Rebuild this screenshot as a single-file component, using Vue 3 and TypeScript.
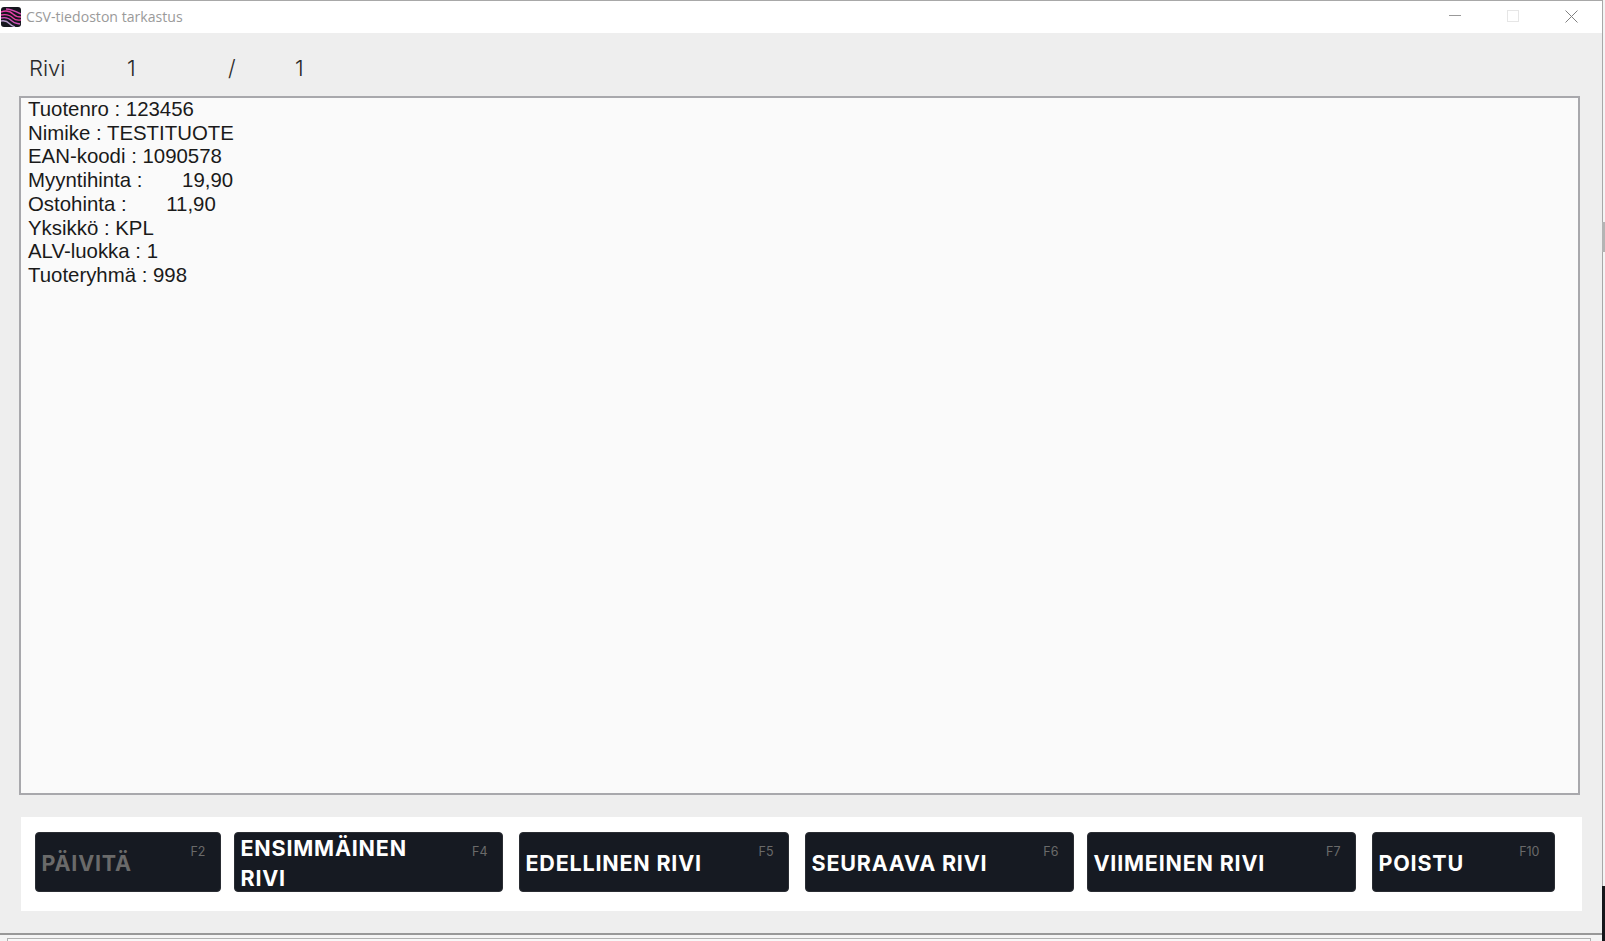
<script setup lang="ts">
interface Action {
  label: string
  key: string
  cls: string
  disabled?: boolean
}

const lines: string[] = [
  'Tuotenro : 123456',
  'Nimike : TESTITUOTE',
  'EAN-koodi : 1090578',
  'Myyntihinta :       19,90',
  'Ostohinta :       11,90',
  'Yksikkö : KPL',
  'ALV-luokka : 1',
  'Tuoteryhmä : 998',
]

const actions: Action[] = [
  { label: 'PÄIVITÄ', key: 'F2', cls: 'a1', disabled: true },
  { label: 'ENSIMMÄINEN RIVI', key: 'F4', cls: 'a2' },
  { label: 'EDELLINEN RIVI', key: 'F5', cls: 'a3' },
  { label: 'SEURAAVA RIVI', key: 'F6', cls: 'a4' },
  { label: 'VIIMEINEN RIVI', key: 'F7', cls: 'a5' },
  { label: 'POISTU', key: 'F10', cls: 'a6' },
]
</script>

<template>
  <div class="screen">
    <div class="window">
      <header class="titlebar">
        <svg class="logo" width="20" height="20" viewBox="0 0 20 20">
          <rect width="20" height="20" rx="3" fill="#15161e" />
          <g fill="none" stroke-width="1.4">
            <path d="M0 5 C5 3 9 4 12 7 S17 10 20 10" stroke="#e63fa4" />
            <path d="M0 8 C5 7 9 8 12 11 S17 13 20 13" stroke="#e63fa4" />
            <path d="M0 11 C4 10 8 11 11 14 S16 16 19 17" stroke="#d050b8" />
            <path d="M5 2 C10 2 14 4 20 7" stroke="#d84ab0" />
            <path d="M0 14 C4 13 7 15 9 17 S12 19 14 20" stroke="#b89ccc" />
          </g>
        </svg>
        <span class="title">CSV-tiedoston tarkastus</span>
        <div class="controls">
          <svg width="12" height="12" viewBox="0 0 12 12"><path d="M0 5.5H12" stroke="#999" /></svg>
          <svg width="12" height="12" viewBox="0 0 12 12"><rect x=".5" y=".5" width="11" height="11" fill="none" stroke="#e6e6e6" /></svg>
          <svg width="13" height="13" viewBox="0 0 13 13"><path d="M.5 .5L12.5 12.5M12.5 .5L.5 12.5" stroke="#808080" /></svg>
        </div>
      </header>

      <main class="body">
        <div class="counter">
          <span class="c-label">Rivi</span>
          <span class="c-cur">1</span>
          <span class="c-sep">/</span>
          <span>1</span>
        </div>

        <div class="record">
          <div v-for="line in lines" :key="line" class="line">{{ line }}</div>
        </div>

        <div class="actions">
          <button
            v-for="a in actions"
            :key="a.key"
            type="button"
            class="action"
            :class="[a.cls, { disabled: a.disabled }]"
          >
            <span class="label">{{ a.label }}</span>
            <span class="fkey">{{ a.key }}</span>
          </button>
        </div>
      </main>
    </div>
    <div class="behind-strip"></div>
    <div class="behind-dark"></div>
    <div class="behind-notch"></div>
  </div>
</template>

<style>
html, body {
  margin: 0;
  background: #f4f4f4;
  overflow: hidden;
}
</style>

<style scoped>
.screen {
  width: 1605px;
  height: 941px;
  overflow: hidden;
  position: relative;
  background: #f4f4f4;
}
.window {
  width: 1603px;
  height: 935px;
  box-sizing: border-box;
  border-top: 1px solid #a8a8a8;
  border-right: 1px solid #a8a8a8;
  border-bottom: 2px solid #989898;
  background: #eeeeee;
  display: flex;
  flex-direction: column;
}
.titlebar {
  height: 32px;
  flex: none;
  background: #fff;
  display: flex;
  align-items: center;
  padding: 0 0 2px 1px;
  box-sizing: border-box;
}
.logo {
  flex: none;
  margin-top: 2px;
}
.title {
  margin-left: 5px;
  font: 14.1px "Open Sans", sans-serif;
  color: #9a9a9a;
}
.controls {
  margin-left: auto;
  display: flex;
  align-items: center;
  gap: 46px;
  padding-right: 24px;
}
.controls svg {
  display: block;
}
.body {
  flex: 1;
  display: flex;
  flex-direction: column;
  padding: 0 0 0 19px;
}
.counter {
  height: 63px;
  flex: none;
  display: flex;
  align-items: center;
  padding: 6px 0 0 10px;
  box-sizing: border-box;
  font: 300 22px Inter, sans-serif;
  color: #2a2a2a;
}
.c-label { width: 98px; }
.c-cur { width: 101px; }
.c-sep { width: 67px; }
.record {
  width: 1561px;
  height: 699px;
  flex: none;
  box-sizing: border-box;
  border: 2px solid #a8a8ac;
  background: #fafafa;
  padding: 0 7px;
}
.line {
  font: 20.4px/23.7px "Liberation Sans", Arial, sans-serif;
  color: #1a1a1a;
  white-space: pre;
}
.actions {
  margin: 22px 0 0 2px;
  width: 1561px;
  height: 94px;
  flex: none;
  box-sizing: border-box;
  background: #fff;
  display: flex;
  align-items: flex-start;
  padding: 15px 0 0 13.5px;
}
.action {
  position: relative;
  height: 60px;
  flex: none;
  box-sizing: border-box;
  border: 1px solid #2a2d33;
  border-radius: 4px;
  background: #161a22;
  padding: 2px 6px 0;
  text-align: left;
  color: #fff;
  display: flex;
  align-items: center;
}
.a1 { width: 186px; margin-right: 13px; }
.a2 { width: 269px; margin-right: 16px; }
.a3 { width: 270px; margin-right: 16px; }
.a4 { width: 269px; margin-right: 13px; }
.a5 { width: 269px; margin-right: 16px; }
.a6 { width: 183px; }
.label {
  font: 700 21.5px/30px Inter, sans-serif;
  letter-spacing: 0.8px;
  max-width: 200px;
}
.disabled .label {
  color: #6a6a6a;
}
.fkey {
  position: absolute;
  top: 11px;
  right: 14px;
  font: 400 12.5px/16px Inter, sans-serif;
  color: #6a6a6a;
}
.behind-strip {
  position: absolute;
  left: 7px;
  top: 938px;
  width: 1584px;
  height: 3px;
  box-sizing: border-box;
  border: 1px solid #b0b0b0;
  border-bottom: 0;
  background: #f8f8f8;
}
.behind-dark {
  position: absolute;
  left: 1602px;
  top: 886px;
  width: 3px;
  height: 55px;
  background: #15161a;
}
.behind-notch {
  position: absolute;
  left: 1602px;
  top: 222px;
  width: 3px;
  height: 30px;
  background: #b4b4b4;
}
</style>
